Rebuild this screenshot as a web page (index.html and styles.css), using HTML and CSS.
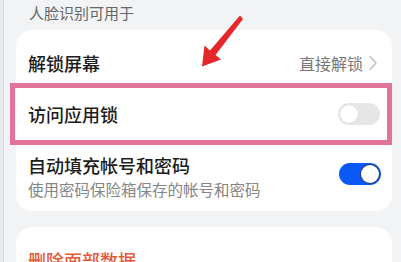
FILE: index.html
```html
<!DOCTYPE html>
<html lang="zh">
<head>
<meta charset="utf-8">
<link rel="stylesheet" href="styles.css">
</head>
<body>
<div class="frame">
  <div class="screen">
    <div class="section-title">人脸识别可用于</div>
    <div class="card">
      <div class="row row-first">
        <span class="label">解锁屏幕</span>
        <span class="value">直接解锁<svg class="chev" width="8" height="16" viewBox="0 0 8 16"><path d="M1 1.5 L7 8 L1 14.5" fill="none" stroke="#bdbdbd" stroke-width="1.4" stroke-linecap="round" stroke-linejoin="round"/></svg></span>
      </div>
      <div class="row row-mid">
        <span class="label">访问应用锁</span>
        <span class="toggle toggle-off"><span class="knob"></span></span>
      </div>
      <div class="row row-last">
        <div class="texts">
          <div class="label">自动填充帐号和密码</div>
          <div class="sub">使用密码保险箱保存的帐号和密码</div>
        </div>
        <span class="toggle toggle-on"><span class="knob"></span></span>
      </div>
    </div>
    <div class="card card-danger">
      <div class="danger">删除面部数据</div>
    </div>
  </div>
  <div class="highlight"></div>
  <svg class="arrow" width="401" height="262" viewBox="0 0 401 262">
    <polygon points="240,15.5 243,19 215.5,55 221,59.5 202,66.5 204.5,45.5 210,50.5" fill="#e5262a"/>
  </svg>
</div>
</body>
</html>
```

FILE: styles.css
```css
* { box-sizing: border-box; }
html, body { margin: 0; padding: 0; }
body {
  width: 401px;
  height: 262px;
  overflow: hidden;
  background: #f1f3f5;
  font-family: "Noto Sans CJK SC", "Noto Sans", sans-serif;
}
.frame {
  position: relative;
  width: 401px;
  height: 262px;
  overflow: hidden;
  padding-left: 3px;
  background: #e9ecef;
}
.screen {
  height: 262px;
  overflow: hidden;
  border-left: 1px solid #d8dce0;
  background: #f1f3f5;
  padding-left: 12px;
  padding-right: 9px;
}
.section-title {
  font-size: 15px;
  line-height: 20px;
  color: #666;
  padding: 3px 0 7px 13px;
}
.card {
  background: #fff;
  border-radius: 16px;
  padding: 0 11px 0 12px;
}
.row {
  display: flex;
  align-items: center;
  justify-content: space-between;
}
.row-first { padding: 21px 0 13px; }
.row-mid { padding: 14px 0 13px; }
.row-last { padding: 14px 0 12px; }
.label {
  font-size: 18px;
  line-height: 24px;
  color: #1c1c1c;
  font-weight: 500;
}
.value {
  display: flex;
  align-items: center;
  font-size: 16px;
  line-height: 24px;
  color: #777;
}
.chev { margin-left: 6px; margin-right: 4px; }
.sub {
  margin-top: 2px;
  font-size: 15.5px;
  line-height: 20px;
  color: #858585;
}
.toggle {
  display: flex;
  align-items: center;
  width: 42px;
  height: 22px;
  border-radius: 11px;
  padding: 2px;
  flex-shrink: 0;
}
.toggle .knob {
  width: 18px;
  height: 18px;
  border-radius: 50%;
  background: #fff;
}
.toggle-off {
  background: #e6e6e6;
  margin-right: 1px;
}
.toggle-off .knob { box-shadow: 0 0 1px rgba(0,0,0,0.15); }
.toggle-on {
  background: #0a59f7;
  justify-content: flex-end;
  margin-bottom: 4px;
}
.toggle-on .knob { box-shadow: 0 0 0 1px #2a3f66; }
.card-danger {
  margin-top: 16px;
  padding-top: 21px;
  height: 35px;
  overflow: hidden;
  border-radius: 16px 16px 0 0;
}
.danger {
  font-size: 18px;
  line-height: 24px;
  color: #e35a3a;
  font-weight: 500;
}
.highlight {
  position: absolute;
  left: 10px;
  top: 83px;
  width: 382px;
  height: 62px;
  border: 5px solid #e2739a;
}
.arrow {
  position: absolute;
  left: 0;
  top: 0;
}
```
